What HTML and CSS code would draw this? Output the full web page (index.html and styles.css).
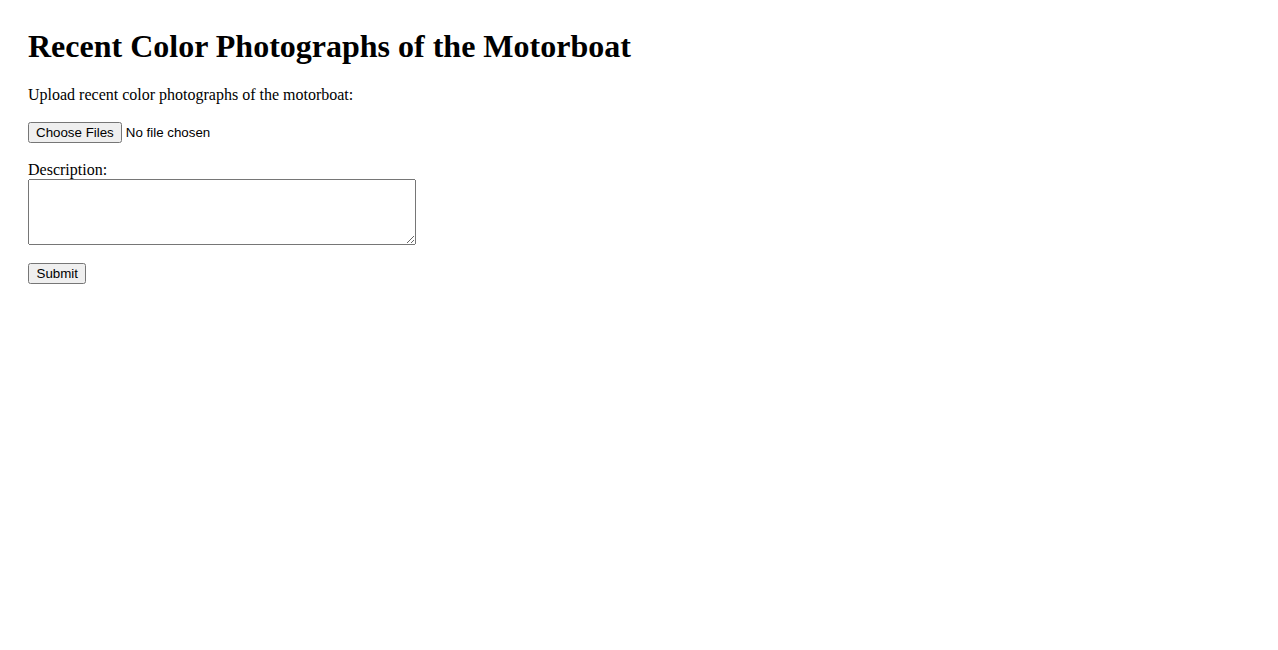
FILE: index.html
```html
<!DOCTYPE html>
<html>
<head>
<meta charset="utf-8">
<title>Recent Color Photographs of the Motorboat</title>
<link rel="stylesheet" href="styles.css">
</head>
<body>
<h1 class="title">Recent Color Photographs of the Motorboat</h1>
<form class="form">
<label class="label" for="photos">Upload recent color photographs of the motorboat:</label><br><br>
<input class="file" type="file" id="photos" multiple><br><br>
<label class="label" for="desc">Description:</label><br>
<textarea class="desc" id="desc" rows="4" cols="50"></textarea><br><br>
<button class="submit" type="submit">Submit</button>
</form>
</body>
</html>
```
FILE: styles.css
```css
html { background: #fff; }
body {
  margin: 8px;
  padding: 20px;
  font-family: "Liberation Serif", "Times New Roman", serif;
  font-size: 16px;
  color: #000;
}
.title {
  font-size: 32px;
  font-weight: bold;
  margin: 0 0 21.44px;
}
.file, .submit {
  font-family: "Liberation Sans", Arial, sans-serif;
  font-size: 13.333px;
}
.submit {
  padding: 1px 6.5px;
}
.desc {
  font-family: "Liberation Mono", monospace;
  font-size: 13.333px;
  box-sizing: border-box;
  width: 388px;
  height: 66px;
  vertical-align: bottom;
}
```
